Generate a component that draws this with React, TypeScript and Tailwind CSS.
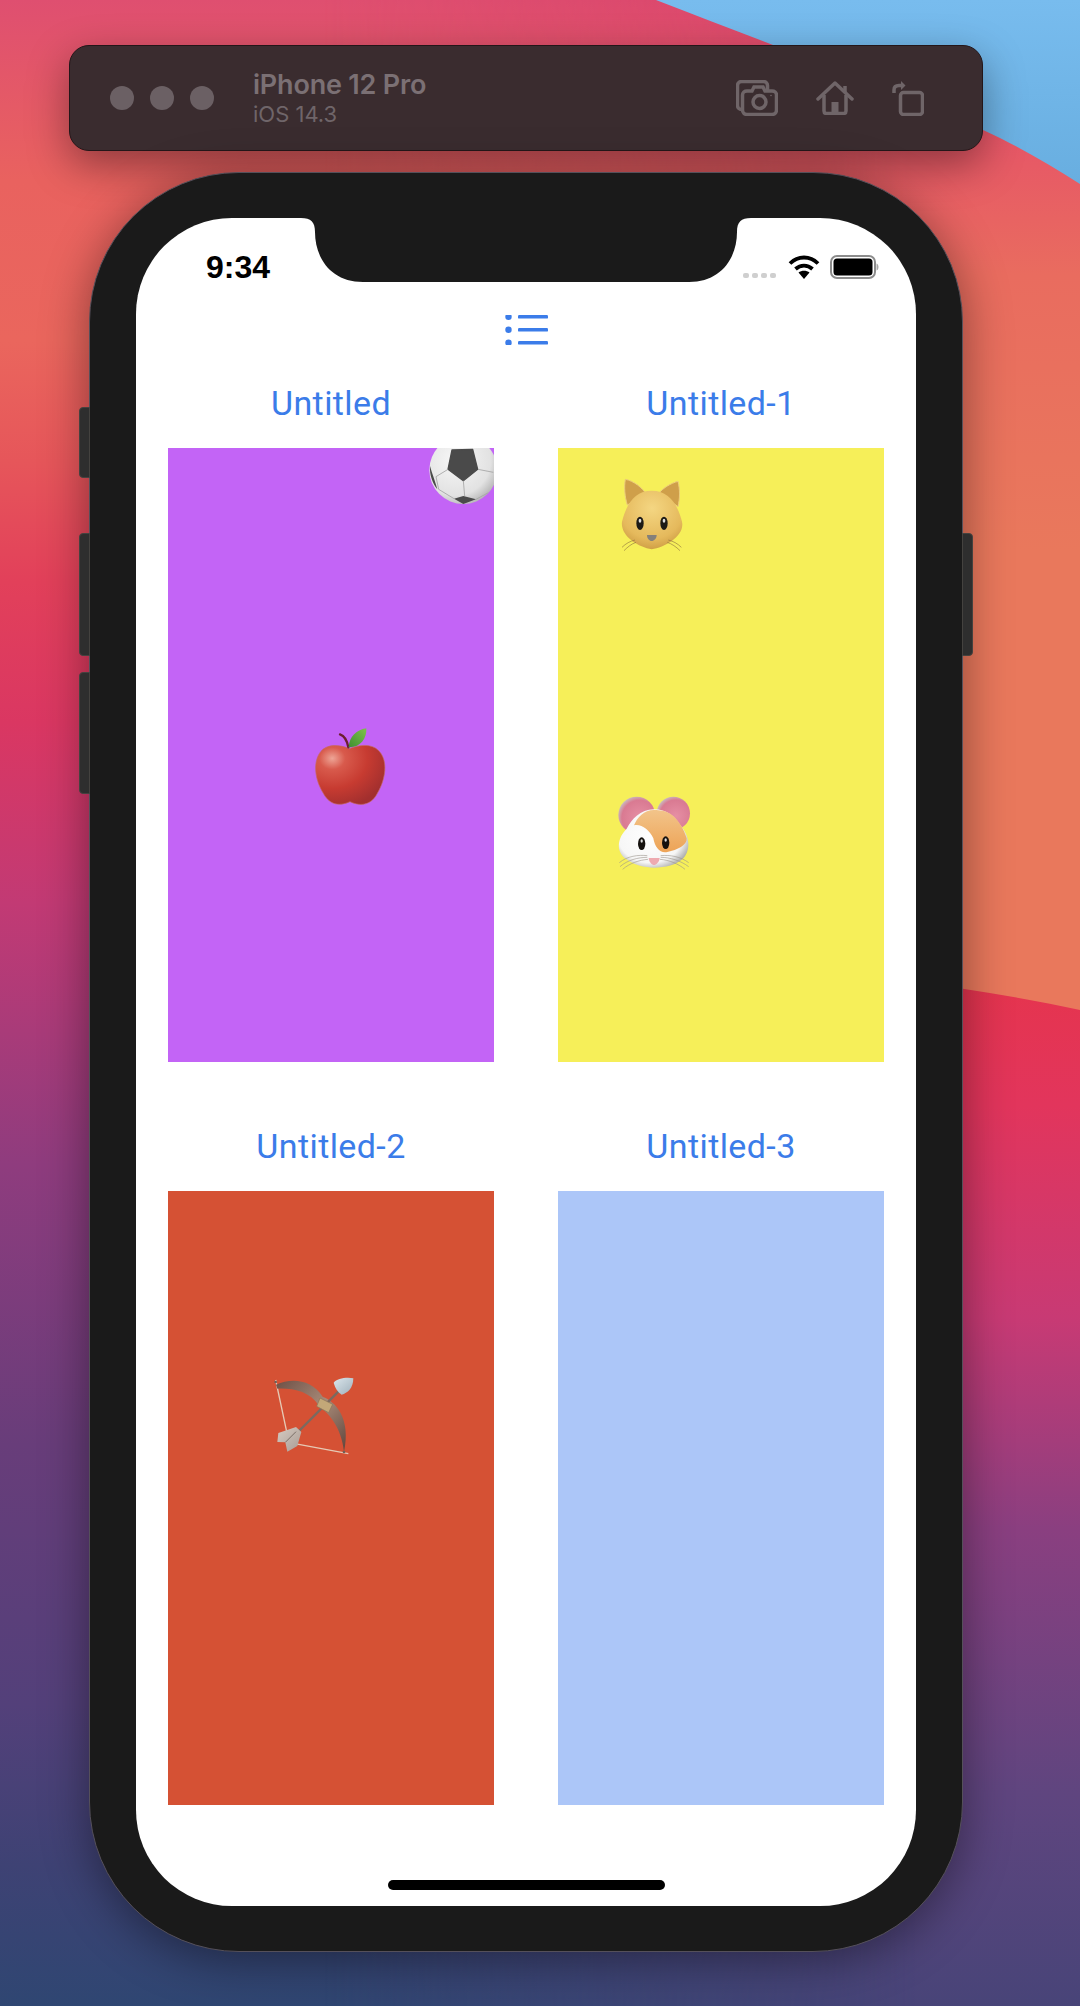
import React from 'react';

const sans = "font-['Inter','Liberation_Sans',sans-serif]";

function Wallpaper() {
  return (
    <svg className="absolute inset-0 w-full h-full" viewBox="0 0 1080 2006" preserveAspectRatio="none">
      <defs>
        <linearGradient id="wallLeft" x1="0" y1="0" x2="0" y2="1">
          <stop offset="0" stopColor="#df4f70" />
          <stop offset="0.09" stopColor="#e9625f" />
          <stop offset="0.17" stopColor="#ea665d" />
          <stop offset="0.23" stopColor="#e6565a" />
          <stop offset="0.29" stopColor="#e2405a" />
          <stop offset="0.36" stopColor="#da3762" />
          <stop offset="0.45" stopColor="#c23a74" />
          <stop offset="0.58" stopColor="#8f3c7e" />
          <stop offset="0.72" stopColor="#683d7a" />
          <stop offset="0.85" stopColor="#53407a" />
          <stop offset="0.93" stopColor="#3e4274" />
          <stop offset="1" stopColor="#2f4672" />
        </linearGradient>
        <linearGradient id="wallRight" x1="0" y1="0" x2="0" y2="1">
          <stop offset="0" stopColor="#d9456c" />
          <stop offset="0.1" stopColor="#e65268" />
          <stop offset="0.25" stopColor="#e96c5f" />
          <stop offset="0.5" stopColor="#e9785c" />
          <stop offset="1" stopColor="#e9785c" />
        </linearGradient>
        <linearGradient id="wallRed" x1="0" y1="0" x2="0" y2="1">
          <stop offset="0" stopColor="#e6344a" />
          <stop offset="0.15" stopColor="#e2355c" />
          <stop offset="0.35" stopColor="#c83a74" />
          <stop offset="0.55" stopColor="#8a3f80" />
          <stop offset="0.8" stopColor="#5f457f" />
          <stop offset="1" stopColor="#484478" />
        </linearGradient>
        <linearGradient id="wallBlue" x1="0" y1="0" x2="0" y2="1">
          <stop offset="0" stopColor="#78bcee" />
          <stop offset="1" stopColor="#68aee0" />
        </linearGradient>
        <linearGradient id="wallFade" x1="0" y1="0" x2="1" y2="0">
          <stop offset="0.3" stopColor="#000" />
          <stop offset="0.85" stopColor="#fff" />
        </linearGradient>
        <mask id="wallMask">
          <rect width="1080" height="2006" fill="url(#wallFade)" />
        </mask>
      </defs>
      <rect width="1080" height="2006" fill="url(#wallLeft)" />
      <g mask="url(#wallMask)">
        <rect width="1080" height="1100" fill="url(#wallRight)" />
        <path d="M0 950 C 400 940 800 950 1080 1010 V2006 H0 Z" fill="url(#wallRed)" />
      </g>
      <path d="M656 0 C 770 44 880 85 983 130 C 1020 147 1050 165 1080 184 V0 Z" fill="url(#wallBlue)" />
    </svg>
  );
}

function CameraIcon() {
  return (
    <svg width="42" height="36" viewBox="0 0 42 36" fill="none" stroke="#6f6568" strokeWidth="3.5">
      <rect x="1.5" y="1.5" width="30" height="28" rx="4" />
      <path d="M11 11 H16 L18 7 H27 L29 11 H36 C38.5 11 40.5 12.5 40.5 15 V30 C40.5 32.5 38.5 34.5 36 34.5 H11 C8.5 34.5 6.5 32.5 6.5 30 V15 C6.5 12.5 8.5 11 11 11 Z" fill="#3a2c2f" />
      <circle cx="23.5" cy="22" r="6.5" />
      <circle cx="35" cy="15.5" r="0.8" fill="#6f6568" stroke="none" />
    </svg>
  );
}

function HomeIcon() {
  return (
    <svg width="38" height="34" viewBox="0 0 38 34" fill="none" stroke="#6f6568" strokeWidth="3.5">
      <path d="M2 18 L19 2 L36 18" strokeLinecap="round" strokeLinejoin="round" />
      <path d="M29 5 V12" />
      <path d="M8 14 V30 C8 31.5 9 32.5 10.5 32.5 H27.5 C29 32.5 30 31.5 30 30 V14" />
      <rect x="15.5" y="21" width="7" height="11" fill="#6f6568" stroke="none" />
    </svg>
  );
}

function RotateIcon() {
  return (
    <svg width="32" height="36" viewBox="0 0 32 36" fill="none" stroke="#6f6568" strokeWidth="3.5">
      <rect x="8.5" y="12.5" width="22" height="22" rx="3" />
      <path d="M2 13 V10 C2 7 4 5.5 7 5.5 H11" />
      <path d="M9 1 L13.5 5.5 L9 10" fill="#6f6568" stroke="none" />
    </svg>
  );
}

function Toolbar() {
  return (
    <div className={`${sans} flex items-center w-[914px] h-[106px] ml-[69px] rounded-[20px] bg-[#3a2c2f] border border-[#241619] shadow-[0_14px_42px_rgba(0,0,0,0.38)]`}>
      <div className="flex items-center gap-[16px] pl-[40px]">
        <span className="w-[24px] h-[24px] rounded-full bg-[#6b6064]" />
        <span className="w-[24px] h-[24px] rounded-full bg-[#6b6064]" />
        <span className="w-[24px] h-[24px] rounded-full bg-[#6b6064]" />
      </div>
      <div className="ml-[39px]">
        <div className="text-[27px] leading-[32px] font-semibold text-[#7b7074] tracking-[-0.2px]">iPhone 12 Pro</div>
        <div className="text-[22px] leading-[27px] text-[#6f6569]">iOS 14.3</div>
      </div>
      <div className="ml-auto flex items-center gap-[38px] pr-[58px]">
        <CameraIcon />
        <HomeIcon />
        <RotateIcon />
      </div>
    </div>
  );
}

function WifiIcon() {
  return (
    <svg width="32" height="24" viewBox="0 0 32 24" fill="none" stroke="#000" strokeWidth="3.8">
      <path d="M2 8.5 C 10 0.5 22 0.5 30 8.5" />
      <path d="M7.5 14 C 12.5 9.5 19.5 9.5 24.5 14" />
      <path d="M16 24 L10.5 17.5 C 13.5 15 18.5 15 21.5 17.5 Z" fill="#000" stroke="none" />
    </svg>
  );
}

function BatteryIcon() {
  return (
    <svg width="49" height="24" viewBox="0 0 49 24">
      <rect x="1" y="1" width="44" height="22" rx="6" fill="none" stroke="#8c8c8c" strokeWidth="2" />
      <rect x="3.5" y="3.5" width="39" height="17" rx="3.5" fill="#000" />
      <path d="M46.5 8.5 C48 9 48.5 10.5 48.5 12 C48.5 13.5 48 15 46.5 15.5 Z" fill="#a8a8a8" />
    </svg>
  );
}

function StatusBar() {
  return (
    <div className={`${sans} flex items-start h-[72px] relative`}>
      <span className="ml-[70px] mt-[30px] text-[32px] leading-[38px] font-bold text-black font-['Liberation_Sans',sans-serif]">9:34</span>
      <div className="ml-auto flex items-end gap-[10px] pr-[37px] mt-[37px]">
        <div className="flex gap-[2.5px] pb-[1px] mr-[2px]">
          <span className="w-[6.5px] h-[5px] rounded-[2px] bg-[#cfcfcf]" />
          <span className="w-[6.5px] h-[5px] rounded-[2px] bg-[#cfcfcf]" />
          <span className="w-[6.5px] h-[5px] rounded-[2px] bg-[#cfcfcf]" />
          <span className="w-[6.5px] h-[5px] rounded-[2px] bg-[#cfcfcf]" />
        </div>
        <WifiIcon />
        <BatteryIcon />
      </div>
    </div>
  );
}

function ListIcon() {
  return (
    <svg width="43" height="30" viewBox="0 0 43 30" fill="#3b7ce9">
      <rect x="13" y="0" width="30" height="3.6" rx="1.2" />
      <rect x="13" y="13" width="30" height="3.6" rx="1.2" />
      <rect x="13" y="26" width="30" height="3.6" rx="1.2" />
      <circle cx="3.5" cy="1.8" r="3.2" />
      <circle cx="3.5" cy="14.8" r="3.2" />
      <circle cx="3.5" cy="27.8" r="3.2" />
    </svg>
  );
}

function Soccer() {
  return (
    <svg className="absolute left-[252px] top-[-18px] w-[90px] h-[90px]" viewBox="0 0 270 270">
      <defs>
        <radialGradient id="ballFill" cx="0.38" cy="0.35" r="0.75">
          <stop offset="0" stopColor="#f7f7f7" />
          <stop offset="0.7" stopColor="#e2e2e2" />
          <stop offset="1" stopColor="#a8a8a8" />
        </radialGradient>
      </defs>
      <circle cx="130" cy="120" r="102" fill="url(#ballFill)" />
      <path d="M96 60 L158 58 L173 118 L130 152 L84 118 Z" fill="#4a4a4a" stroke="#4a4a4a" strokeWidth="4" strokeLinejoin="round" />
      <path d="M102 206 L130 198 L168 208 L130 222 Z" fill="#4a4a4a" />
      <path d="M30 108 C 36 130 46 155 52 178 C 38 160 28 135 30 108 Z" fill="#4a4a4a" />
      <path d="M84 118 L48 140 L56 178 M174 118 L220 127 M130 152 L134 198 M56 178 L102 206 M168 208 L205 188" stroke="#a3a3a3" strokeWidth="2.5" fill="none" />
    </svg>
  );
}

function Apple() {
  return (
    <svg className="absolute left-[122px] top-[252px] w-[120px] h-[120px]" viewBox="0 0 360 360">
      <defs>
        <radialGradient id="appleFill" cx="0.24" cy="0.22" r="0.85">
          <stop offset="0" stopColor="#eea596" />
          <stop offset="0.22" stopColor="#d85a4c" />
          <stop offset="0.6" stopColor="#c73b31" />
          <stop offset="1" stopColor="#a22f2e" />
        </radialGradient>
        <linearGradient id="leafFill" x1="1" y1="0" x2="0" y2="1">
          <stop offset="0" stopColor="#7fc24c" />
          <stop offset="1" stopColor="#3f8f30" />
        </linearGradient>
      </defs>
      <path d="M178 146 C150 134 112 130 92 155 C68 186 74 238 100 280 C116 310 142 322 180 305 C216 322 246 312 262 280 C286 240 296 182 266 152 C246 130 206 134 178 146 Z" fill="url(#appleFill)" stroke="#c46a5e" strokeWidth="2" />
      <path d="M150 103 C165 108 172 125 175 142" stroke="#6b1f2e" strokeWidth="7" fill="none" strokeLinecap="round" />
      <path d="M176 142 C178 110 198 90 229 85 C231 115 212 143 176 142 Z" fill="url(#leafFill)" />
    </svg>
  );
}

function Whiskers({ d, color }: { d: string; color: string }) {
  return <path d={d} stroke={color} strokeWidth="1.8" fill="none" />;
}

function Cat() {
  return (
    <svg className="absolute left-[42px] top-[12px] w-[100px] h-[100px]" viewBox="0 0 300 300">
      <defs>
        <radialGradient id="catFill" cx="0.5" cy="0.3" r="0.8">
          <stop offset="0" stopColor="#f4d682" />
          <stop offset="0.65" stopColor="#e5b95c" />
          <stop offset="1" stopColor="#c4913a" />
        </radialGradient>
      </defs>
      <path d="M76 58 C100 62 128 84 138 102 L82 135 C74 110 72 80 76 58 Z" fill="#cf9f4a" stroke="#edcd7c" strokeWidth="3" />
      <path d="M234 64 C212 70 190 84 178 98 L234 140 C240 115 240 88 234 64 Z" fill="#cf9f4a" stroke="#edcd7c" strokeWidth="3" />
      <path d="M155 92 C105 92 80 130 66 185 C60 228 115 262 155 268 C195 262 255 228 246 185 C232 130 205 92 155 92 Z" fill="url(#catFill)" />
      <ellipse cx="120" cy="190" rx="11" ry="20" fill="#1d1a16" />
      <ellipse cx="192" cy="190" rx="11" ry="20" fill="#1d1a16" />
      <ellipse cx="120" cy="182" rx="4" ry="6" fill="#ddd" />
      <ellipse cx="192" cy="182" rx="4" ry="6" fill="#ddd" />
      <path d="M141 225 H170 C170 236 162 243 155 243 C148 243 141 236 141 225 Z" fill="#85807a" />
      <Whiskers color="#8a6f3c" d="M105 240 C90 244 78 250 66 262 M108 247 C94 252 84 260 72 272 M205 240 C220 244 232 250 244 262 M202 247 C216 252 228 260 240 272" />
    </svg>
  );
}

function Hamster() {
  return (
    <svg className="absolute left-[32px] top-[322px] w-[120px] h-[120px]" viewBox="0 0 360 360">
      <defs>
        <radialGradient id="earFill" cx="0.58" cy="0.58" r="0.62">
          <stop offset="0" stopColor="#e68fa4" />
          <stop offset="0.78" stopColor="#d97a92" />
          <stop offset="1" stopColor="#c8c0c2" />
        </radialGradient>
        <linearGradient id="hamsterFur" x1="0" y1="0" x2="0" y2="1">
          <stop offset="0" stopColor="#f2c48a" />
          <stop offset="1" stopColor="#eda356" />
        </linearGradient>
        <radialGradient id="hamsterFace" cx="0.45" cy="0.45" r="0.62">
          <stop offset="0" stopColor="#ffffff" />
          <stop offset="0.75" stopColor="#f6f6f6" />
          <stop offset="1" stopColor="#a8a8a8" />
        </radialGradient>
      </defs>
      <circle cx="140" cy="135" r="55" fill="url(#earFill)" />
      <circle cx="250" cy="130" r="50" fill="url(#earFill)" />
      <path d="M192 118 C150 118 126 148 110 176 C84 202 76 240 105 265 C130 285 165 293 192 293 C225 293 260 285 280 265 C306 236 296 192 270 165 C255 140 230 118 192 118 Z" fill="url(#hamsterFace)" />
      <path d="M192 120 C162 120 142 142 132 166 C152 160 178 178 190 205 C194 232 212 252 232 246 C262 240 292 226 290 205 C282 178 266 150 246 135 C230 122 210 120 192 120 Z" fill="url(#hamsterFur)" />
      <ellipse cx="155" cy="221" rx="11" ry="19" fill="#15110e" />
      <ellipse cx="227" cy="218" rx="11" ry="19" fill="#15110e" />
      <ellipse cx="155" cy="213" rx="3.5" ry="5" fill="#ddd" />
      <ellipse cx="227" cy="210" rx="3.5" ry="5" fill="#ddd" />
      <path d="M176 264 H209 C208 277 198 285 192 285 C186 285 177 277 176 264 Z" fill="#eeaab0" />
      <Whiskers color="#9a948c" d="M172 257 C145 254 112 258 88 278 M172 262 C145 262 112 270 90 290 M174 268 C148 270 118 280 98 298 M212 257 C240 254 272 260 296 278 M212 262 C240 262 272 272 296 290 M210 268 C238 270 266 282 285 298" />
    </svg>
  );
}

function Bow() {
  return (
    <svg className="absolute left-[92px] top-[169px] w-[110px] h-[110px]" viewBox="0 0 330 330">
      <defs>
        <linearGradient id="bowWood" x1="0" y1="0" x2="1" y2="1">
          <stop offset="0" stopColor="#6e5046" />
          <stop offset="0.5" stopColor="#a88a78" />
          <stop offset="1" stopColor="#5f443b" />
        </linearGradient>
        <linearGradient id="arrowHead" x1="0" y1="0" x2="1" y2="1">
          <stop offset="0" stopColor="#dce6ec" />
          <stop offset="1" stopColor="#9eb0bb" />
        </linearGradient>
        <linearGradient id="feather" x1="0" y1="0" x2="1" y2="1">
          <stop offset="0" stopColor="#d6cbc2" />
          <stop offset="1" stopColor="#a89c94" />
        </linearGradient>
      </defs>
      <path d="M47 60 L80 215 M100 250 L265 281" stroke="#e6c9b4" strokeWidth="4" fill="none" />
      <path d="M80 215 L100 250" stroke="#e6c9b4" strokeWidth="3" fill="none" />
      <path d="M48 74 C95 52 155 58 188 110 C226 124 274 175 252 275 C244 205 212 166 176 136 C150 95 100 84 52 86 Z" fill="url(#bowWood)" />
      <path d="M90 240 L238 92" stroke="#7a6a60" strokeWidth="7" fill="none" />
      <path d="M55 219 L108 201 L124 216 L112 258 L82 275 L76 247 L52 246 Z" fill="url(#feather)" />
      <path d="M76 247 L108 215" stroke="#7a6e66" strokeWidth="3" fill="none" />
      <path d="M280 55 C262 50 230 55 221 68 C225 85 233 95 245 104 C262 100 280 85 280 55 Z" fill="url(#arrowHead)" />
      <path d="M180 114 L218 133 L206 158 L170 139 Z" fill="#c3a878" stroke="#8a7458" strokeWidth="2" />
      <circle cx="47" cy="66" r="4" fill="#6d6058" />
      <circle cx="252" cy="276" r="4" fill="#6d6058" />
    </svg>
  );
}

const apps = [
  { title: 'Untitled', color: 'bg-[#c364f6]', stickers: [<Soccer key="ball" />, <Apple key="apple" />] },
  { title: 'Untitled-1', color: 'bg-[#f6ef59]', stickers: [<Cat key="cat" />, <Hamster key="hamster" />] },
  { title: 'Untitled-2', color: 'bg-[#d55134]', stickers: [<Bow key="bow" />] },
  { title: 'Untitled-3', color: 'bg-[#acc6f8]', stickers: [] },
];

function Phone() {
  return (
    <div className="relative w-[874px] h-[1780px] ml-[89px] mt-[21px] px-[46px] pt-[45px] rounded-[150px] bg-[#1a1a1a] border border-[#55505a] shadow-[0_8px_48px_rgba(0,0,0,0.42)]">
      <span className="absolute left-[-11px] top-[234px] w-[11px] h-[71px] rounded-l-[4px] bg-[#2e2e2e] border border-[#44423f]" />
      <span className="absolute left-[-11px] top-[360px] w-[11px] h-[123px] rounded-l-[4px] bg-[#2e2e2e] border border-[#44423f]" />
      <span className="absolute left-[-11px] top-[499px] w-[11px] h-[122px] rounded-l-[4px] bg-[#2e2e2e] border border-[#44423f]" />
      <span className="absolute right-[-11px] top-[360px] w-[11px] h-[123px] rounded-r-[4px] bg-[#2e2e2e] border border-[#44423f]" />

      <div className="relative w-[780px] h-[1688px] rounded-[96px] bg-white overflow-hidden">
        <svg className="absolute left-[165px] top-0" width="450" height="64" viewBox="0 0 450 64" fill="#1a1a1a">
          <path d="M0 0 C10 0 14 4 14 14 C14 40 30 64 62 64 H388 C420 64 436 40 436 14 C436 4 440 0 450 0 Z" />
        </svg>
        <StatusBar />
        <div className="flex justify-center pt-[25px]">
          <ListIcon />
        </div>
        <div className="grid grid-cols-2 gap-x-[64px] gap-y-[64px] px-[32px] mt-[38px]">
          {apps.map((app) => (
            <div key={app.title}>
              <div className="mb-[25px] text-center text-[34px] leading-[40px] tracking-[0.4px] text-[#3b7ce9] font-['Roboto',sans-serif]">{app.title}</div>
              <div className={`relative h-[614px] overflow-hidden ${app.color}`}>{app.stickers}</div>
            </div>
          ))}
        </div>
        <div className="absolute left-[252px] bottom-[16px] w-[277px] h-[10px] rounded-full bg-black" />
      </div>
    </div>
  );
}

export default function App() {
  return (
    <div className="relative w-[1080px] h-[2006px] overflow-hidden">
      <Wallpaper />
      <div className="relative pt-[45px]">
        <Toolbar />
        <Phone />
      </div>
    </div>
  );
}
